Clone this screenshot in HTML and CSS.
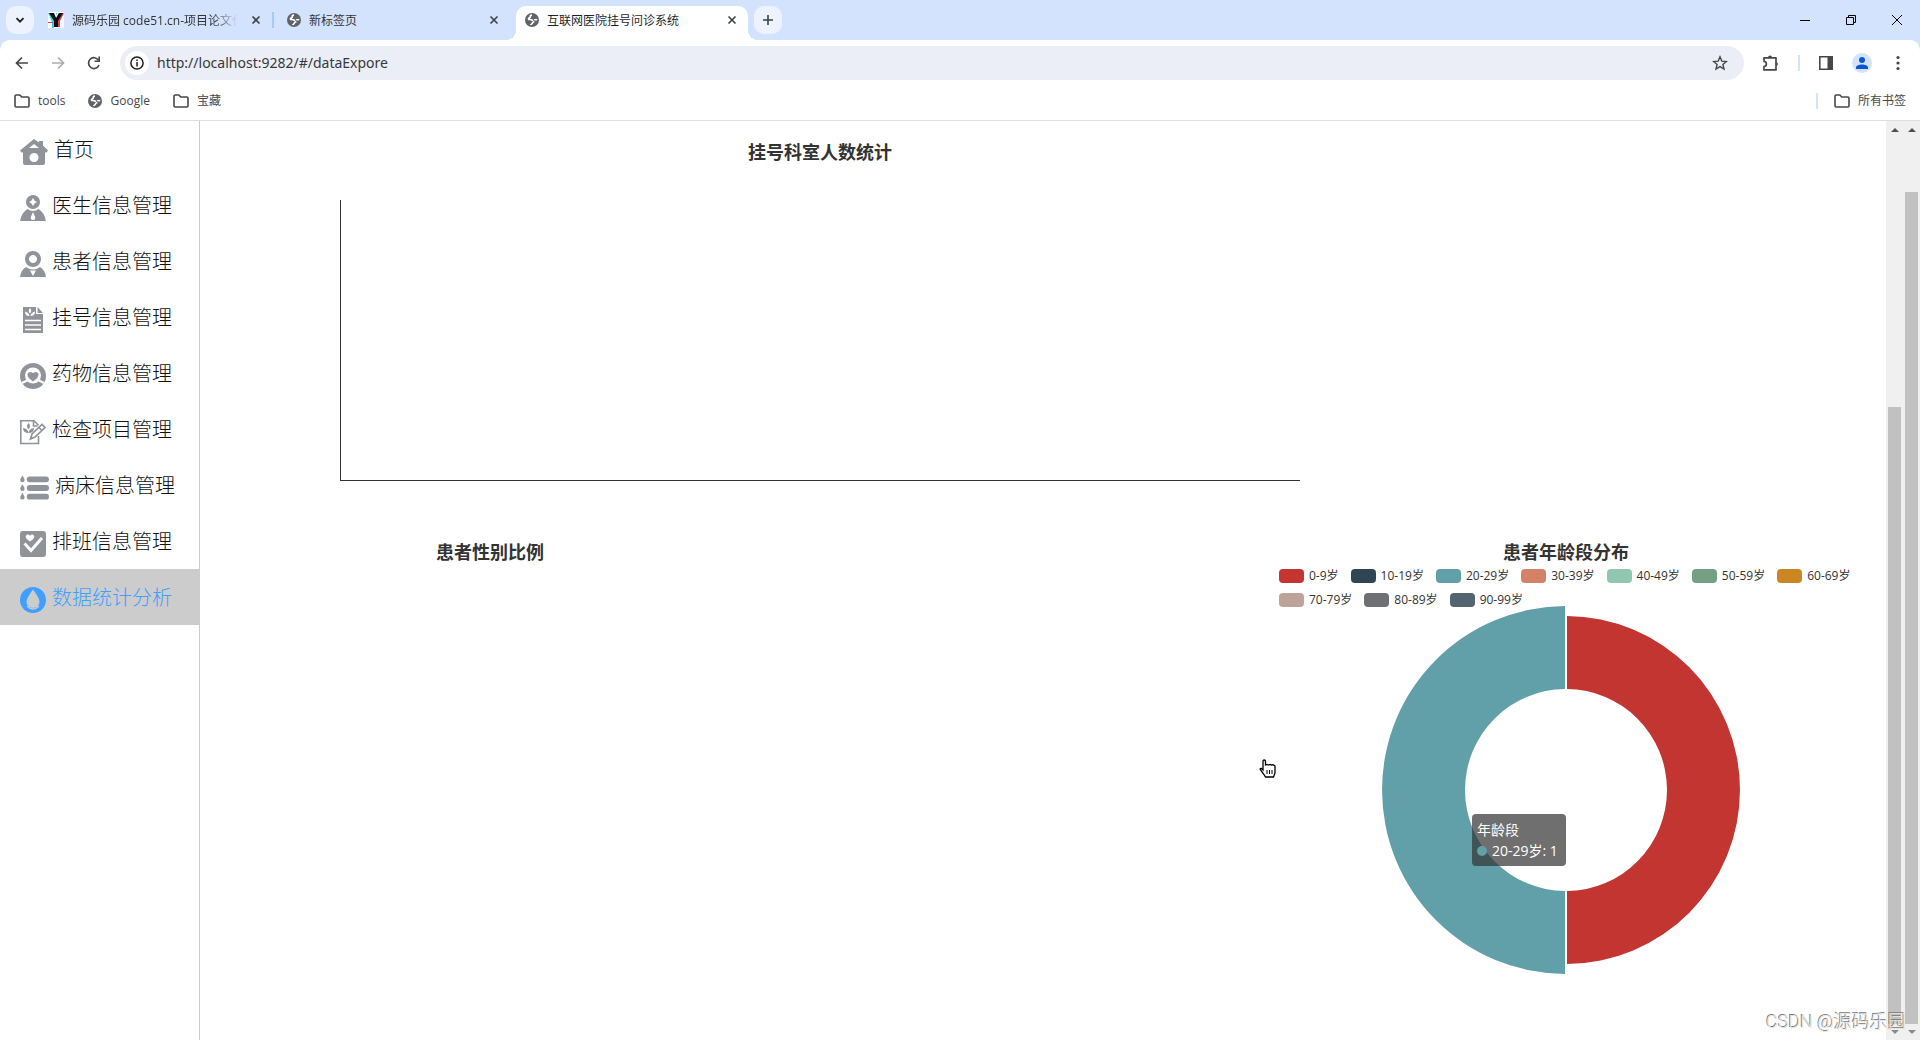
FILE: index.html
```html
<!DOCTYPE html>
<html lang="zh-CN">
<head>
<meta charset="utf-8">
<title>互联网医院挂号问诊系统</title>
<link rel="stylesheet" href="styles.css">
</head>
<body>
<svg class="defs" aria-hidden="true">
  <symbol id="globe" viewBox="0 0 14 14"><circle cx="7" cy="7" r="7" fill="#5f6368"/><path d="M7 2.200c-1.500 0-2 .6-1.700 1.500.2.900-.8 1-1.500 1.500-.6.500-.3 1.300.7 1.300 1.600 0 3 .2 3.100 1.500M12 6.200c-.8.900-2.200.6-2.700 0M5.600 12c.3-1 1.700-.8 1.800-2 .1-1 1.200-1.100 2-1.400" fill="none" stroke="#fff" stroke-width="1.700"/></symbol>
  <symbol id="close" viewBox="0 0 12 12"><path d="M2.500 2.500l7 7M9.500 2.500l-7 7" stroke="#3c4043" stroke-width="1.600"/></symbol>
  <symbol id="folder" viewBox="0 0 16 14"><path d="M1 2.200Q1 1 2.200 1h3.600l2 2h6Q15 3 15 4.200v7.600Q15 13 13.800 13H2.200Q1 13 1 11.800z" fill="none" stroke="#474747" stroke-width="1.600"/></symbol>
</svg>

<header class="browser">
  <div class="tabstrip">
    <button class="round-btn" aria-label="搜索标签页"><svg width="12" height="12" viewBox="0 0 12 12"><path d="M2.500 4.200L6 7.700l3.500-3.500" fill="none" stroke="#1f1f1f" stroke-width="1.800"/></svg></button>
    <div class="tab tab-first">
      <svg width="16" height="16" viewBox="0 0 16 16"><path fill="#fff" d="M0 0h16v16H0z"/><path d="M0 1h5l3 6V1h1L6 10v6H4v-6z" fill="#25d8e8"/><path d="M11 1h5l-4 8v6h-2V8zM0 10h5v1H0z" fill="#f2385a"/><path d="M1 1h5l2 5 3-5h4l-5 8v6H6V9z" fill="#0a0a12"/></svg>
      <span class="tab-title fade">源码乐园 code51.cn-项目论文代</span>
      <button class="tab-close" aria-label="关闭"><svg width="12" height="12"><use href="#close"/></svg></button>
    </div>
    <i class="tab-sep"></i>
    <div class="tab tab-second">
      <svg width="14" height="14"><use href="#globe"/></svg>
      <span class="tab-title">新标签页</span>
      <button class="tab-close" aria-label="关闭"><svg width="12" height="12"><use href="#close"/></svg></button>
    </div>
    <div class="tab tab-active">
      <svg width="14" height="14"><use href="#globe"/></svg>
      <span class="tab-title">互联网医院挂号问诊系统</span>
      <button class="tab-close" aria-label="关闭"><svg width="12" height="12"><use href="#close"/></svg></button>
    </div>
    <button class="round-btn" aria-label="新标签页"><svg width="12" height="12" viewBox="0 0 12 12"><path d="M6 1v10M1 6h10" stroke="#3c4043" stroke-width="1.600"/></svg></button>
    <div class="window-controls">
      <button aria-label="最小化"><svg width="12" height="12"><path d="M1 6.500h10" stroke="#000"/></svg></button>
      <button aria-label="还原"><svg width="12" height="12"><path d="M1.500 3.500h7v7h-7zM3.500 3.500v-2h7v7h-2" fill="none" stroke="#000"/></svg></button>
      <button aria-label="关闭窗口"><svg width="12" height="12"><path d="M1 1l10 10M11 1L1 11" stroke="#000"/></svg></button>
    </div>
  </div>

  <div class="toolbar">
    <button class="nav-btn" aria-label="后退"><svg width="16" height="16"><path d="M14 8H3M8 2.500L2.500 8 8 13.500" fill="none" stroke="#474747" stroke-width="1.700"/></svg></button>
    <button class="nav-btn" aria-label="前进"><svg width="16" height="16"><path d="M2 8h11M8 2.500L13.500 8 8 13.500" fill="none" stroke="#adadad" stroke-width="1.700"/></svg></button>
    <button class="nav-btn" aria-label="重新加载"><svg width="16" height="16"><path d="M13 10a5.400 5.400 0 1 1-.5-4.800" fill="none" stroke="#474747" stroke-width="1.700"/><path d="M14 1.500V7H8.500V5.400h3.900V1.500z" fill="#474747"/></svg></button>
    <div class="omnibox">
      <button class="site-info" aria-label="网站信息"><svg width="14" height="14"><circle cx="7" cy="7" r="6.100" fill="none" stroke="#1f1f1f" stroke-width="1.500"/><path d="M7 6v4.500M7 3.400v1.600" stroke="#1f1f1f" stroke-width="1.500"/></svg></button>
      <input class="url" type="text" aria-label="地址" value="http://localhost:9282/#/dataExpore">
      <button class="bare" aria-label="收藏"><svg width="16" height="16" viewBox="0 0 16 16"><path d="M8 1.800l1.800 4.300 4.600.4-3.500 3 1.100 4.500L8 11.600 4 14l1.100-4.500-3.500-3 4.600-.4z" fill="none" stroke="#474747" stroke-width="1.400"/></svg></button>
    </div>
    <div class="tools">
      <button class="bare" aria-label="扩展程序"><svg width="18" height="18" viewBox="0 0 18 18"><path d="M2 3.800H14v12.100H2V12.300a2.300 2.300 0 0 0 0-4.800z" fill="none" stroke="#474747" stroke-width="1.700" stroke-linejoin="round"/><path d="M6 3.500a2 2 0 0 1 4 0zM14.500 8a2 2 0 0 1 0 3.800z" fill="#474747"/></svg></button>
      <i class="bar-sep"></i>
      <button class="bare" aria-label="侧边栏"><svg width="16" height="16"><path d="M1.800 1.800h12.400v12.400H1.800z" fill="none" stroke="#474747" stroke-width="1.600"/><path d="M9.500 1H15v14H9.500z" fill="#474747"/></svg></button>
      <button class="bare" aria-label="个人资料"><svg width="20" height="20"><circle cx="10" cy="10" r="10" fill="#d3e3fd"/><circle cx="10" cy="7" r="3" fill="#0b57d0"/><path d="M4 16v-1.500c0-2 3-3 6-3s6 1 6 3V16z" fill="#0b57d0"/></svg></button>
      <button class="bare" aria-label="菜单"><svg width="16" height="16"><g fill="#474747"><circle cx="8" cy="2.500" r="1.600"/><circle cx="8" cy="8" r="1.600"/><circle cx="8" cy="13.500" r="1.600"/></g></svg></button>
    </div>
  </div>

  <nav class="bookmarks" aria-label="书签">
    <a href="#"><svg width="16" height="14"><use href="#folder"/></svg>tools</a>
    <a href="#"><svg width="14" height="14"><use href="#globe"/></svg>Google</a>
    <a href="#"><svg width="16" height="14"><use href="#folder"/></svg>宝藏</a>
    <i class="bar-sep push"></i>
    <a href="#"><svg width="16" height="14"><use href="#folder"/></svg>所有书签</a>
  </nav>
</header>

<div class="app">
  <nav class="sidebar" aria-label="主菜单">
    <a href="#"><svg width="28" height="26" viewBox="0 0 28 26"><path fill-rule="evenodd" d="M14 0l5 3.500V2h4v4.500l5 5-1.500 2H25V24q0 2-2 2H5q-2 0-2-2V13.500H1.500L0 11.500zM14 5L9 9h10zM14 14a4.500 4.500 0 1 0 .01 0z"/></svg>首页</a>
    <a href="#"><svg width="26" height="26" viewBox="0 0 26 26"><path fill-rule="evenodd" d="M13 0a7 7 0 1 1-.01 0zM13 3q1 3 4 4-3 1-4 4-1-3-4-4 3-1 4-4zM7.500 14q2.500 2 5.500 2t5.500-2Q24 17 26 26H0Q2 17 7.500 14zM13 17l-2 4.500q-1 3.500 2 3.500t2-3.500z"/></svg>医生信息管理</a>
    <a href="#"><svg width="26" height="26" viewBox="0 0 26 26"><path fill-rule="evenodd" d="M13 0a8 8 0 1 1-.01 0zM13 4a4 4 0 1 0 .01 0zM6 16q3 2.500 7 2.500t7-2.500q5 3 6 10H0Q1 19 6 16zM10 19.500l3 5.500 3-5.500z"/></svg>患者信息管理</a>
    <a href="#"><svg width="26" height="26" viewBox="0 0 26 26"><path d="M3 0h13v7h7v19H3zM17.500 0L23 6h-5.500z"/><path d="M10 1q-2.500 3 0 5.500Q12.500 4 10 1zM5 4.500q0 4.500 4.500 4.500Q9 5.500 5 4.500zM15 4.500q0 4.500-4.500 4.500Q11 5.500 15 4.500z" fill="#fff"/><path d="M5 13.500h16M5 18h16M5 22.500h16" stroke="#fff" stroke-width="1.500"/></svg>挂号信息管理</a>
    <a href="#"><svg width="26" height="26" viewBox="0 0 26 26"><circle cx="13" cy="13" r="13"/><circle cx="13" cy="12.500" r="8" fill="#fff"/><path d="M13 18.500q-6-4-5.500-7.500Q9 7.500 13 10q4-2.500 5.500 1 .5 3.500-5.500 7.500z"/><path d="M2 20l5-2.500M24 20l-5-2.500" stroke="#fff" stroke-width="2"/></svg>药物信息管理</a>
    <a href="#"><svg width="26" height="26" viewBox="0 0 26 26"><path d="M18.500 17v7.500H.8V1.800H14l4.500 4.500M13.500 2v5h4" fill="none" stroke="#909399" stroke-width="1.600"/><path d="M8.500 4q-3 3 0 6.500 3-3.500 0-6.500zM3 9q0 5 5.500 5Q8 9.500 3 9zM14 9q0 5-5.500 5Q9 9.500 14 9z"/><path d="M10.500 20l1.500-5L22 5.500l3 3L15 18z" fill="#fff" stroke="#909399" stroke-width="1.700"/><path d="M19 8.500l3 3" stroke="#909399" stroke-width="1.500"/></svg>检查项目管理</a>
    <a href="#"><svg width="29" height="26" viewBox="0 0 30 26"><rect x="7" y="1" width="23" height="6" rx="3"/><rect x="7" y="10" width="23" height="6" rx="3"/><rect x="7" y="19" width="23" height="6" rx="3"/><path d="M2.500 0l2 3.500q1 3.500-2 3.500t-2-3.500zM2.500 9l2 3.500q1 3.500-2 3.500t-2-3.500zM2.500 18l2 3.500q1 3.500-2 3.500t-2-3.500z"/></svg>病床信息管理</a>
    <a href="#"><svg width="26" height="26" viewBox="0 0 26 26"><rect width="26" height="26" rx="3"/><path d="M10 10.500Q4.500 7 6 4.500 8 2.500 10 4.800q2-2.300 4-.3 1.500 2.500-4 6z" fill="#fff"/><path d="M4.500 12.500l6.500 7L22 7" fill="none" stroke="#fff" stroke-width="3"/></svg>排班信息管理</a>
    <a href="#" class="active" aria-current="page"><svg width="26" height="26" viewBox="0 0 26 26"><circle cx="13" cy="13" r="13"/><path d="M13 2.500Q6.500 11 6.500 15a6.500 6 0 0 0 13 0Q19.500 11 13 2.500z" fill="#ccc"/><path d="M7 19q6 6 12 0" fill="none" stroke="#ccc" stroke-width="1.500"/></svg>数据统计分析</a>
  </nav>

  <main class="content">
    <section class="chart-dept">
      <h2>挂号科室人数统计</h2>
      <div class="axes"></div>
    </section>
    <div class="chart-row">
      <section class="chart-gender"><h2>患者性别比例</h2></section>
      <section class="chart-age">
        <svg class="pie" width="600" height="500" viewBox="0 0 600 500" role="img" aria-label="年龄段">
          <path d="M299 66.003A184 184 0 0 0 299 433.997V350.995A101 101 0 0 1 299 149.005z" fill="#61a0a8"/>
          <path d="M301 76.003A174 174 0 0 1 301 423.997V350.995A101 101 0 0 0 301 149.005z" fill="#c23531"/>
        </svg>
        <div class="chart-head">
          <h2>患者年龄段分布</h2>
          <ul class="legend">
            <li class="c0">0-9岁</li><li class="c1">10-19岁</li><li class="c2">20-29岁</li><li class="c3">30-39岁</li><li class="c4">40-49岁</li><li class="c5">50-59岁</li><li class="c6">60-69岁</li><li class="c7">70-79岁</li><li class="c8">80-89岁</li><li class="c9">90-99岁</li>
          </ul>
        </div>
        <div class="tooltip" role="tooltip">年龄段<br><i class="dot"></i>20-29岁: 1</div>
        <svg class="pointer" width="18" height="20" viewBox="0 0 18 20"><path d="M4 2.500Q4 1 5.200 1 6.500 1 6.500 2.500V6l1.500-.5L9.500 6l1.500-.5L12.500 6l1.500-.3L16 7v7l-1.500 4h-8L5 15.500 1.500 11q-1-2 1-1.500L4 11z" fill="#fff" stroke="#000" stroke-width="1.300"/><path d="M8 11v4M10.500 11v4M13 11v4" stroke="#000"/></svg>
      </section>
    </div>
  </main>

  <div class="scrollbar"><i class="arrow up"></i><i class="thumb inner"></i><i class="arrow down"></i></div>
  <div class="scrollbar"><i class="arrow up"></i><i class="thumb outer"></i><i class="arrow down"></i></div>
  <div class="watermark">CSDN @源码乐园</div>
</div>
</body>
</html>
```
FILE: styles.css
```css
* { box-sizing: border-box; }
body {
  margin: 0;
  height: 100vh;
  display: flex;
  flex-direction: column;
  overflow: hidden;
  background: #fff;
  color: #333;
  font-family: "Open Sans", "Noto Sans CJK SC", sans-serif;
}
svg { display: block; flex: none; }
.defs { position: absolute; width: 0; height: 0; }
button { border: 0; padding: 0; background: none; display: flex; align-items: center; justify-content: center; flex: none; }
a { color: inherit; text-decoration: none; }
h2 { margin: 0; font-size: 18px; line-height: 24px; text-align: center; font-weight: 700; color: #333; }

/* browser frame */
.browser { flex: none; background: #d3e3fd; border-bottom: 1px solid #dedede; font-size: 12px; }
.tabstrip { display: flex; align-items: center; height: 40px; padding: 6px 0 0 6px; }
.tabstrip > .round-btn { margin-bottom: 6px; }
.round-btn { width: 28px; height: 28px; border-radius: 10px; background: #ecf2fe; }
.tab { display: flex; align-items: center; height: 34px; padding-bottom: 6px; gap: 8px; }
.tab-first { width: 240px; padding-left: 14px; padding-right: 12px; }
.tab-second { width: 242px; padding-left: 13px; padding-right: 16px; }
.tab-active { width: 232px; margin-right: 6px; padding-left: 9px; padding-right: 10px; background: #fff; border-radius: 10px 10px 0 0; color: #1f1f1f; position: relative; }
.tab-active::before, .tab-active::after { content: ""; position: absolute; bottom: 0; width: 10px; height: 10px; }
.tab-active::before { right: 100%; background: radial-gradient(circle at 0 0, transparent 10px, #fff 10px); }
.tab-active::after { left: 100%; background: radial-gradient(circle at 100% 0, transparent 10px, #fff 10px); }
.tab-title { flex: 1; min-width: 0; white-space: nowrap; line-height: 20px; padding-top: 2px; }
.fade { -webkit-mask-image: linear-gradient(90deg, #000 140px, transparent 166px); mask-image: linear-gradient(90deg, #000 140px, transparent 166px); }
.tab-sep { width: 2px; height: 16px; margin-left: -2px; margin-bottom: 6px; background: #a8c7fa; }
.window-controls { display: flex; align-self: flex-start; margin-left: auto; }
.window-controls button { width: 46px; height: 28px; }

.toolbar { display: flex; align-items: center; height: 46px; padding: 0 14px 0 4px; background: #fff; border-radius: 10px 10px 0 0; }
.nav-btn { width: 36px; height: 34px; }
.omnibox { display: flex; align-items: center; flex: 1; height: 34px; margin-left: 8px; padding: 0 16px 0 5px; border-radius: 17px; background: #ebeef7; }
.site-info { width: 24px; height: 24px; border-radius: 50%; background: #fff; }
.url { flex: 1; min-width: 0; margin-left: 8px; padding: 0; border: 0; outline: 0; background: none; color: #36383b; font: 14px/20px "Noto Sans", "Noto Sans CJK SC", sans-serif; }
.tools { display: flex; align-items: center; gap: 18px; margin-left: 18px; }
.bar-sep { width: 2px; height: 16px; background: #d3e3fd; }

.bookmarks { display: flex; align-items: center; gap: 23px; height: 34px; padding: 0 14px 5px; background: #fff; color: #474747; }
.bookmarks a { display: flex; align-items: center; gap: 8px; line-height: 20px; }
.push { margin-left: auto; margin-right: -7px; }

/* application */
.app { position: relative; display: flex; flex: 1; min-height: 0; }
.sidebar { flex: none; width: 200px; border-right: 1px solid #ccc; }
.sidebar a { display: flex; align-items: center; gap: 6px; height: 56px; padding-top: 2px; padding-left: 20px; font-size: 20px; line-height: 28px; font-weight: 300; color: #111; white-space: nowrap; }
.sidebar svg { margin-top: 3px; fill: #909399; }
.sidebar .active { background: #ccc; color: #409eff; }
.sidebar .active svg { fill: #409eff; }

.content { flex: 1; min-width: 0; overflow: hidden; padding: 19px 20px 0; }
.chart-dept { max-width: 1200px; height: 400px; }
.axes { height: 281px; margin: 36px 10% 0; border-left: 1px solid #333; border-bottom: 1px solid #333; }
.chart-row { display: flex; justify-content: space-between; }
.chart-gender { width: 540px; }
.chart-age { position: relative; display: grid; width: 600px; }
.pie, .chart-head { grid-area: 1 / 1; }
.legend { display: flex; flex-wrap: wrap; gap: 0 12px; width: 574px; margin: 0 auto; padding: 0; list-style: none; font-size: 12px; line-height: 24px; }
.legend li { display: flex; align-items: center; gap: 5px; }
.legend li::before { content: ""; width: 25px; height: 14px; border-radius: 4px; background: var(--c); }
.c0 { --c: #c23531; } .c1 { --c: #2f4554; } .c2 { --c: #61a0a8; } .c3 { --c: #d48265; } .c4 { --c: #91c7ae; }
.c5 { --c: #749f83; } .c6 { --c: #ca8622; } .c7 { --c: #bda29a; } .c8 { --c: #6e7074; } .c9 { --c: #546570; }
.tooltip { position: absolute; left: 206px; top: 274px; min-width: 94px; padding: 5px; border-radius: 4px; background: rgba(50, 50, 50, .7); color: #fff; font-size: 14px; line-height: 21px; white-space: nowrap; }
.dot { display: inline-block; width: 10px; height: 10px; margin-right: 5px; border-radius: 50%; background: #61a0a8; }
.pointer { position: absolute; left: -7px; top: 219px; }

.scrollbar { display: flex; flex-direction: column; align-items: center; justify-content: space-between; flex: none; width: 17px; padding: 6px 0; background: #f0f0f0; }
.thumb { width: 13px; background: #c1c1c1; }
.inner { flex: 1; margin: 275px 0 6px; }
.outer { flex: 1; margin: 60px 0 6px; }
.arrow { border: 4px solid transparent; height: 0; }
.up { border-top: 0; border-bottom-color: #505050; margin-top: 1px; }
.down { border-bottom: 0; border-top-color: #8a8a8a; }
.watermark { position: absolute; right: 14px; bottom: 4px; font: 18px/28px Roboto, "Noto Sans CJK SC", sans-serif; font-weight: 300; color: #e4e4e4; text-shadow: -1px -1px 0 #777; white-space: nowrap; }
```
